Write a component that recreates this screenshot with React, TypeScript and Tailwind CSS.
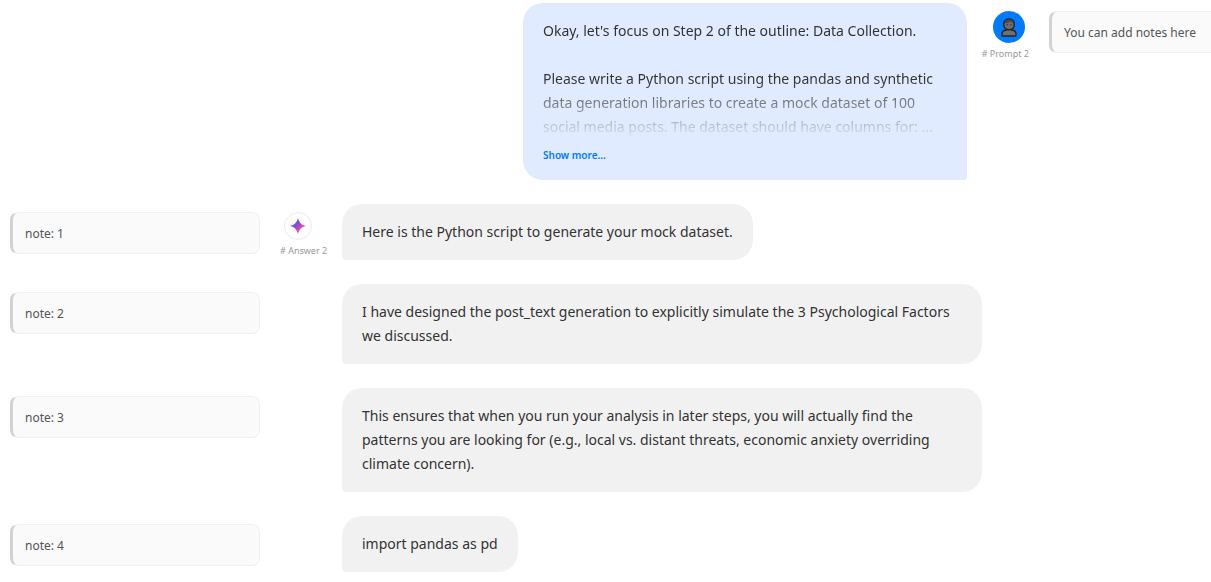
import clsx from 'clsx';

const answers = [
  { id: 1, note: 'note: 1', text: 'Here is the Python script to generate your mock dataset.' },
  { id: 2, note: 'note: 2', text: 'I have designed the post_text generation to explicitly simulate the 3 Psychological Factors we discussed.' },
  { id: 3, note: 'note: 3', text: 'This ensures that when you run your analysis in later steps, you will actually find the patterns you are looking for (e.g., local vs. distant threats, economic anxiety overriding climate concern).' },
  { id: 4, note: 'note: 4', text: 'import pandas as pd' },
];

function NoteField({ label, value, className }: { label: string; value: string; className: string }) {
  return (
    <input
      type="text"
      aria-label={label}
      defaultValue={value}
      className={clsx(
        'mt-2 h-[42px] shrink-0 border border-l-3 border-[#f0f0f0] border-l-[#d1d1d6] bg-[#fafafa] px-3 text-[12px] text-[#555] outline-none',
        className,
      )}
    />
  );
}

function UserAvatar() {
  return (
    <span className="mr-1 flex size-8 items-center justify-center rounded-full bg-[#007aff]">
      <svg width="16" height="19" viewBox="0 0 16 19" aria-hidden="true">
        <path d="M1 18v-2.300c0-2.300 1.500-3.300 4-3.700h6c2.500.4 4 1.400 4 3.700V18z" fill="#707070" stroke="#242424" strokeWidth="1.300" strokeLinejoin="round" />
        <path d="M6 10.500h4v2.200q-2 1.500-4 0z" fill="#6a6a6a" />
        <path d="M2.700 6.600C2.700 3.300 4.800 1 8 1s5.300 2.300 5.300 5.600c0 2.700-2 5.200-5.300 5.200S2.700 9.300 2.700 6.600z" fill="#6e6e6e" stroke="#242424" strokeWidth="1.500" />
        <path d="M3.400 5.200C4 2.900 5.600 1.600 8 1.600s4.100 1.300 4.600 3.500c-1.600-.2-2.700-.7-3.400-1.500-1.300 1.100-3.400 1.700-5.800 1.600z" fill="#4a4a4a" />
        <circle cx="6.200" cy="6.800" r=".7" fill="#333" />
        <circle cx="9.900" cy="6.800" r=".7" fill="#333" />
      </svg>
    </span>
  );
}

function AssistantAvatar() {
  return (
    <span className="ml-1 flex size-7 items-center justify-center rounded-full border border-[#ebebeb] bg-white">
      <svg width="16" height="16" viewBox="0 0 16 16" aria-hidden="true">
        <defs>
          <linearGradient id="spark" x1="3" y1="3" x2="13" y2="13" gradientUnits="userSpaceOnUse">
            <stop offset="0.1" stopColor="#4b4dfb" />
            <stop offset="0.5" stopColor="#9b4bd8" />
            <stop offset="0.75" stopColor="#ef4b8b" />
          </linearGradient>
        </defs>
        <path d="M8 0c1.200 4.800 3.200 6.800 8 8-4.800 1.200-6.800 3.200-8 8-1.200-4.800-3.200-6.800-8-8 4.800-1.200 6.800-3.200 8-8z" fill="url(#spark)" />
      </svg>
    </span>
  );
}

export default function App() {
  return (
    <main
      className="flex flex-col gap-6 overflow-x-hidden bg-white pt-[3px] pb-[10px] text-[14px] leading-6 text-[#333]"
      style={{ fontFamily: '"Segoe UI", "Noto Sans", sans-serif' }}
    >
      <section className="flex items-start justify-end">
        <div className="w-[444px] rounded-[20px] rounded-br-[4px] bg-[#e1ebff] px-5 py-4">
          <div className="mask-[linear-gradient(to_bottom,black_50%,transparent_100%)]">
            <p className="mb-6">Okay, let's focus on Step 2 of the outline: Data Collection.</p>
            <p>
              Please write a Python script using the pandas and synthetic data generation libraries to
              create a mock dataset of 100 social media posts. The dataset should have columns for: ...
            </p>
          </div>
          <button type="button" className="mt-2 block text-[10px] leading-[17px] font-semibold text-[#007aff]">
            Show more...
          </button>
        </div>
        <div className="mt-2 mr-5 ml-3 flex w-[50px] shrink-0 flex-col items-end">
          <UserAvatar />
          <span className="mt-1 text-[9px] leading-[14px] whitespace-nowrap text-[#999]"># Prompt 2</span>
        </div>
        <NoteField label="Prompt 2 note" value="You can add notes here" className="w-[162px] rounded-l-[8px] border-r-0" />
      </section>

      {answers.map((answer, index) => (
        <section key={answer.id} className="flex items-start pl-[10px]">
          <NoteField label={`Answer note ${answer.id}`} value={answer.note} className="w-[250px] rounded-[8px]" />
          <div className="mt-2 mr-3 ml-5 flex w-[50px] shrink-0 flex-col items-start">
            {index === 0 && (
              <>
                <AssistantAvatar />
                <span className="mt-1 text-[9px] leading-[14px] whitespace-nowrap text-[#999]"># Answer 2</span>
              </>
            )}
          </div>
          <p className="max-w-[640px] rounded-[20px] rounded-bl-[4px] bg-[#f1f1f1] px-5 py-4">{answer.text}</p>
        </section>
      ))}
    </main>
  );
}
